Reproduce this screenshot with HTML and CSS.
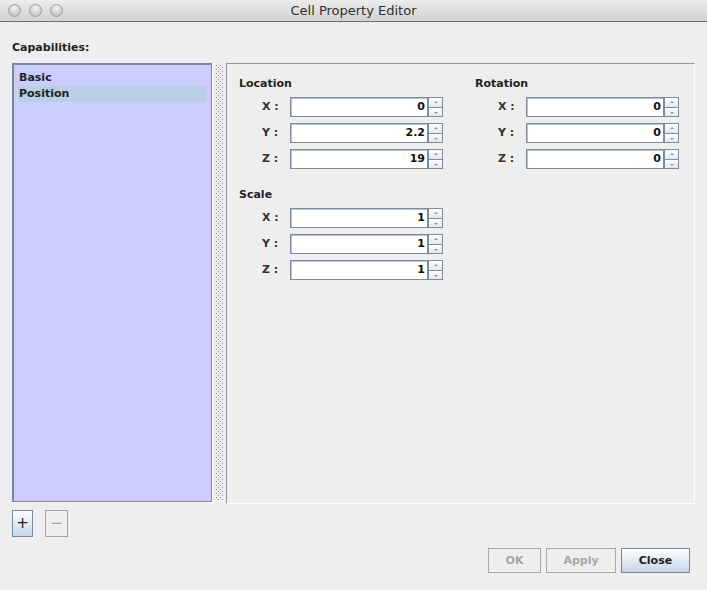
FILE: index.html
```html
<!DOCTYPE html>
<html>
<head>
<meta charset="utf-8">
<title>Cell Property Editor</title>
<link rel="stylesheet" href="styles.css">
</head>
<body>
<div class="window">
  <div class="titlebar">
    <div class="lights">
      <span class="light"></span><span class="light"></span><span class="light"></span>
    </div>
    <div class="title">Cell Property Editor</div>
  </div>
  <div class="dialog">
    <div class="caption">Capabilities:</div>
    <div class="main">
      <div class="list">
        <div class="item">Basic</div>
        <div class="item selected">Position</div>
      </div>
      <div class="splitter">
        <svg width="8" height="436" viewBox="0 0 8 436">
          <defs>
            <pattern id="dots" width="4" height="4" patternUnits="userSpaceOnUse">
              <rect x="0" y="0" width="1" height="1" fill="#8e8e8e"/>
              <rect x="2" y="2" width="1" height="1" fill="#8e8e8e"/>
            </pattern>
          </defs>
          <rect x="0" y="0" width="8" height="436" fill="url(#dots)"/>
        </svg>
      </div>
      <div class="panel">
        <div class="groups">
          <div class="group">
            <div class="group-title">Location</div>
            <div class="row"><span class="lbl">X :</span><div class="field">0</div><div class="spin"><span class="up"></span><span class="down"></span></div></div>
            <div class="row"><span class="lbl">Y :</span><div class="field">2.2</div><div class="spin"><span class="up"></span><span class="down"></span></div></div>
            <div class="row"><span class="lbl">Z :</span><div class="field">19</div><div class="spin"><span class="up"></span><span class="down"></span></div></div>
          </div>
          <div class="group">
            <div class="group-title">Rotation</div>
            <div class="row"><span class="lbl">X :</span><div class="field">0</div><div class="spin"><span class="up"></span><span class="down"></span></div></div>
            <div class="row"><span class="lbl">Y :</span><div class="field">0</div><div class="spin"><span class="up"></span><span class="down"></span></div></div>
            <div class="row"><span class="lbl">Z :</span><div class="field">0</div><div class="spin"><span class="up"></span><span class="down"></span></div></div>
          </div>
        </div>
        <div class="groups second">
          <div class="group">
            <div class="group-title">Scale</div>
            <div class="row"><span class="lbl">X :</span><div class="field">1</div><div class="spin"><span class="up"></span><span class="down"></span></div></div>
            <div class="row"><span class="lbl">Y :</span><div class="field">1</div><div class="spin"><span class="up"></span><span class="down"></span></div></div>
            <div class="row"><span class="lbl">Z :</span><div class="field">1</div><div class="spin"><span class="up"></span><span class="down"></span></div></div>
          </div>
        </div>
      </div>
    </div>
    <div class="tools">
      <button class="tool add">+</button>
      <button class="tool remove" disabled>&minus;</button>
    </div>
    <div class="actions">
      <button class="btn disabled ok" disabled>OK</button>
      <button class="btn disabled apply" disabled>Apply</button>
      <button class="btn primary close">Close</button>
    </div>
  </div>
</div>
</body>
</html>
```
FILE: styles.css
```css
* { box-sizing: border-box; }
html, body { margin: 0; padding: 0; }
body {
  background: #eeeeee;
  font-family: "DejaVu Sans", "Liberation Sans", sans-serif;
  font-size: 11px;
  font-weight: bold;
  color: #222;
}
.window {
  width: 707px;
  height: 590px;
  display: flex;
  flex-direction: column;
  overflow: hidden;
}
.titlebar {
  height: 22px;
  flex: none;
  background: linear-gradient(#ececec, #d2d2d2);
  border-bottom: 1px solid #6f6f6f;
  display: flex;
  align-items: center;
  position: relative;
}
.lights {
  display: flex;
  gap: 8px;
  padding-left: 8px;
}
.light {
  width: 13px;
  height: 13px;
  border-radius: 50%;
  border: 1px solid #9d9d9d;
  background: radial-gradient(circle at 50% 30%, #f4f4f4 0%, #d8d8d8 45%, #b9b9b9 100%);
}
.title {
  position: absolute;
  left: 0;
  right: 0;
  top: 0;
  line-height: 22px;
  text-align: center;
  font-size: 13px;
  font-weight: normal;
  color: #2f2f2f;
}
.dialog {
  padding: 0 12px;
  display: flex;
  flex-direction: column;
}
.caption {
  margin-top: 19px;
  line-height: 14px;
  color: #222;
}
.main {
  margin-top: 8px;
  height: 441px;
  display: flex;
  align-items: flex-start;
}
.list {
  flex: none;
  width: 200px;
  height: 439px;
  background: #ccccff;
  border-style: solid;
  border-color: #7a8999;
  border-width: 2px 1px 1px 2px;
  box-shadow: 1px 1px 0 #ffffff;
  padding: 4px 5px 0 4px;
}
.item {
  line-height: 17px;
  padding-left: 1px;
  color: #222;
}
.item.selected {
  background: #b8cfe5;
  line-height: 16px;
}
.splitter {
  width: 14px;
  height: 441px;
  flex: none;
  padding: 2px 0 0 4px;
}
.splitter svg { display: block; }
.panel {
  flex: none;
  width: 469px;
  height: 441px;
  overflow: hidden;
  border-style: solid;
  border-width: 1px;
  border-color: #8896a4 #ffffff #ffffff #8896a4;
  padding: 13px 0 0 12px;
}
.groups {
  display: flex;
}
.groups.second { margin-top: 13px; }
.group { width: 236px; flex: none; }
.group-title {
  line-height: 14px;
  color: #222;
  margin-bottom: 6px;
}
.row {
  display: flex;
  align-items: stretch;
  height: 20px;
  margin-bottom: 6px;
  padding-left: 23px;
}
.lbl {
  width: 28px;
  flex: none;
  line-height: 20px;
  color: #333;
}
.field {
  width: 138px;
  flex: none;
  background: #ffffff;
  border: 1px solid #7f8d9b;
  box-shadow: inset 1px 1px 0 #b9c3cd;
  text-align: right;
  padding-right: 2px;
  line-height: 18px;
  color: #111;
}
.spin {
  width: 15px;
  flex: none;
  display: flex;
  flex-direction: column;
}
.spin span {
  flex: 1;
  border: 1px solid #7f8d9b;
  background: linear-gradient(#ffffff, #e1e8ef);
  position: relative;
}
.spin .down { border-top: none; }
.spin span::after {
  content: "";
  position: absolute;
  left: 5px;
  top: 3px;
  width: 0;
  height: 0;
  border-left: 2px solid transparent;
  border-right: 2px solid transparent;
}
.spin .up::after { border-bottom: 2px solid #8a96a2; }
.spin .down::after { border-top: 2px solid #8a96a2; top: 4px; }
.tools {
  margin-top: 6px;
  display: flex;
  gap: 12px;
}
.tool {
  height: 27px;
  font-family: "DejaVu Sans", sans-serif;
  font-weight: normal;
  font-size: 15px;
  padding: 0;
  line-height: 25px;
}
.tool.add {
  width: 21px;
  border: 1px solid #7a8999;
  background: linear-gradient(#ffffff, #c7d7e9);
  color: #222;
}
.tool.remove {
  width: 23px;
  border: 1px solid #a4a4a4;
  background: #eeeeee;
  color: #a0a0a0;
}
.actions {
  margin-top: 11px;
  display: flex;
  justify-content: flex-end;
  gap: 5px;
  padding-right: 5px;
}
.btn {
  height: 25px;
  font-family: "DejaVu Sans", sans-serif;
  font-size: 11px;
  font-weight: bold;
  padding: 0;
}
.btn.ok { width: 53px; }
.btn.apply { width: 70px; }
.btn.close { width: 69px; }
.btn.disabled {
  border: 1px solid #a8a8a8;
  background: #eeeeee;
  color: #a6a6a6;
}
.btn.primary {
  border: 1px solid #7a8999;
  background: linear-gradient(#ffffff, #c6d6e8);
  color: #222;
}
```
